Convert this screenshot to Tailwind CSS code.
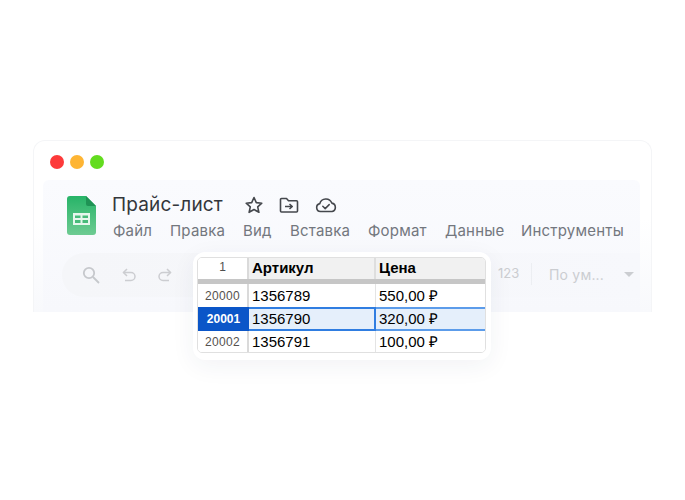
<!doctype html>
<html lang="ru">
<head>
<meta charset="utf-8">
<script src="https://cdn.jsdelivr.net/npm/@tailwindcss/browser@4"></script>
</head>
<body class="bg-white">
<div class="relative w-[685px] h-[500px] overflow-hidden pt-[140px] pl-[33px] font-['Inter',sans-serif]">
  <div class="w-[619px] h-[172px] rounded-t-[12px] border border-b-0 border-[#f4f5f7] bg-gradient-to-b from-white from-45% to-[#f8f9fc] pl-[9px] pr-[11px] flex flex-col">
    <div class="h-[39px] shrink-0 flex items-start gap-[6px] pt-[14px] pl-[7px]">
      <span class="w-[14px] h-[14px] rounded-full bg-[#fd3a3a]"></span>
      <span class="w-[14px] h-[14px] rounded-full bg-[#feb534]"></span>
      <span class="w-[14px] h-[14px] rounded-full bg-[#63dc1f]"></span>
    </div>
    <div class="flex-1 rounded-t-[6px] bg-gradient-to-b from-[#fafbfe] to-[#f7f8fc] pt-[14px] pl-[24px]">
      <div class="flex gap-[16px]">
        <svg width="29" height="39" viewBox="0 0 29 39" class="mt-[2px] shrink-0">
          <defs><linearGradient id="g" x1="0" y1="0" x2="0" y2="1"><stop offset="0" stop-color="#27b468"/><stop offset="1" stop-color="#6ecb92"/></linearGradient></defs>
          <path d="M3 0H19L29 10V36a3 3 0 0 1-3 3H3a3 3 0 0 1-3-3V3a3 3 0 0 1 3-3z" fill="url(#g)"/>
          <path d="M19 0L29 10H21a2 2 0 0 1-2-2z" fill="#1f9355"/>
          <path d="M6 17H23V29H6z" fill="#e6f6ec"/>
          <path d="M8 19.500H13.500V22H8zM15.500 19.500H21V22H15.500zM8 24H13.500V27H8zM15.500 24H21V27H15.500z" fill="#48bb7a"/>
        </svg>
        <div class="flex flex-col">
          <div class="flex items-center h-[24px] mt-[-1px]">
            <span class="text-[19px] leading-[24px] tracking-[0.15px] text-[#33363b] w-[132px] shrink-0">Прайс-лист</span>
            <svg width="20" height="20" viewBox="0 0 20 20" fill="none" stroke="#44474c" stroke-width="1.600" stroke-linejoin="round" class="mr-[15px]"><path d="M10 2.500l2.300 5.100 5.500.6-4.100 3.700 1.200 5.400L10 14.500l-4.900 2.800 1.200-5.400-4.100-3.700 5.500-.6z"/></svg>
            <svg width="20" height="18" viewBox="0 0 20 18" fill="none" stroke="#44474c" stroke-width="1.600" stroke-linejoin="round" class="mr-[16px]"><path d="M1.500 3.500a1 1 0 0 1 1-1h5l2 2.200h8a1 1 0 0 1 1 1V15a1 1 0 0 1-1 1h-15a1 1 0 0 1-1-1z"/><path d="M6 10.500h7M10.500 8l2.800 2.500-2.800 2.500" stroke-width="1.500"/></svg>
            <svg width="22" height="18" viewBox="0 0 22 18" fill="none" stroke="#44474c" stroke-width="1.600" stroke-linejoin="round" stroke-linecap="round"><path d="M5.500 15.500a4 4 0 0 1-.7-7.900 6.300 6.300 0 0 1 12-.5 4.300 4.300 0 0 1 .3 8.400z"/><path d="M7.800 10.300l2.400 2.300 4-4" stroke-width="1.500"/></svg>
          </div>
          <div class="flex mt-[3px] ml-[1px] text-[15px] leading-[22px] tracking-[0.2px] text-[#73777e] whitespace-nowrap">
            <span class="w-[57px]">Файл</span>
            <span class="w-[73px]">Правка</span>
            <span class="w-[47px]">Вид</span>
            <span class="w-[78px]">Вставка</span>
            <span class="w-[77px]">Формат</span>
            <span class="w-[76px]">Данные</span>
            <span>Инструменты</span>
          </div>
        </div>
      </div>
      <div class="mt-[11px] ml-[-5px] h-[44px] rounded-l-[22px] bg-gradient-to-r from-[#f5f6f9] to-[#f7f8fc] flex items-center pl-[20px] pb-[2px]">
        <svg width="18" height="18" viewBox="0 0 18 18" fill="none" stroke="#c6c8cc" stroke-width="1.800" class="mr-[22px] mt-[2px]"><circle cx="7" cy="7" r="5.200"/><path d="M11 11l6 6"/></svg>
        <svg width="14" height="14" viewBox="0 0 14 14" fill="none" stroke="#cccdd1" stroke-width="1.500" class="mr-[22px] mt-[2px]"><path d="M5 1L1.500 4.500 5 8"/><path d="M1.500 4.500H9a3.700 3.700 0 0 1 0 8H3"/></svg>
        <svg width="14" height="14" viewBox="0 0 14 14" fill="none" stroke="#cccdd1" stroke-width="1.500" class="mt-[2px]"><path d="M9 1l3.500 3.500L9 8"/><path d="M12.500 4.500H5a3.700 3.700 0 0 0 0 8h6"/></svg>
        <span class="ml-[326px] text-[13px] text-[#cbcdd1] w-[33px] shrink-0">123</span>
        <span class="w-px h-[22px] bg-[#eceef2] mr-[17px]"></span>
        <span class="text-[14px] text-[#cbcdd1] w-[75px] shrink-0 tracking-[0.2px]">По ум...</span>
        <svg width="10" height="5" viewBox="0 0 10 5"><path d="M0 0h10L5 5z" fill="#cbcdd1"/></svg>
      </div>
    </div>
  </div>

  <div class="absolute left-[193px] top-[252px] w-[298px] h-[108px] rounded-[12px] bg-white shadow-[0_6px_24px_rgba(40,50,80,0.06)] pt-[5px] pl-[4px] font-['Liberation_Sans',sans-serif] text-black">
    <div class="w-[289px] h-[96px] rounded-[5px] border border-[#e0e0e0] overflow-hidden grid grid-cols-[51px_127px_1fr] grid-rows-[21px_5px_23px_24px_1fr]">
      <div class="flex items-center justify-center pb-[3px] text-[12px] text-[#4f4f4f] bg-white border-r-2 border-[#dadada]">1</div>
      <div class="flex items-center pl-[3px] text-[15px] font-bold bg-[#f1f1f1] border-r-2 border-[#dedede]">Артикул</div>
      <div class="flex items-center pl-[3px] text-[15px] font-bold bg-[#f1f1f1]">Цена</div>

      <div class="col-span-3 bg-[#c6c6c6]"></div>

      <div class="flex items-center justify-center text-[12px] tracking-[0.3px] text-[#55514e] bg-white border-r-2 border-[#dadada]">20000</div>
      <div class="flex items-center pl-[3px] pt-[2px] text-[15px] bg-white border-r border-[#e4e4e4]">1356789</div>
      <div class="flex items-center pl-[3px] pt-[2px] text-[15px] bg-white">550,00 ₽</div>

      <div class="flex items-center justify-center text-[12px] font-bold text-white bg-[#0b56c8]">20001</div>
      <div class="flex items-center pl-[3px] text-[15px] bg-[#e5effb] border-y-2 border-r-2 border-[#2f7de1]">1356790</div>
      <div class="flex items-center pl-[3px] text-[15px] bg-[#e5effb] border-y-2 border-[#5c9cea]">320,00 ₽</div>

      <div class="flex items-center justify-center text-[12px] tracking-[0.3px] text-[#55514e] bg-white border-r-2 border-[#dadada]">20002</div>
      <div class="flex items-center pl-[3px] text-[15px] bg-white border-r border-[#e4e4e4]">1356791</div>
      <div class="flex items-center pl-[3px] text-[15px] bg-white">100,00 ₽</div>
    </div>
  </div>
</div>
</body>
</html>
